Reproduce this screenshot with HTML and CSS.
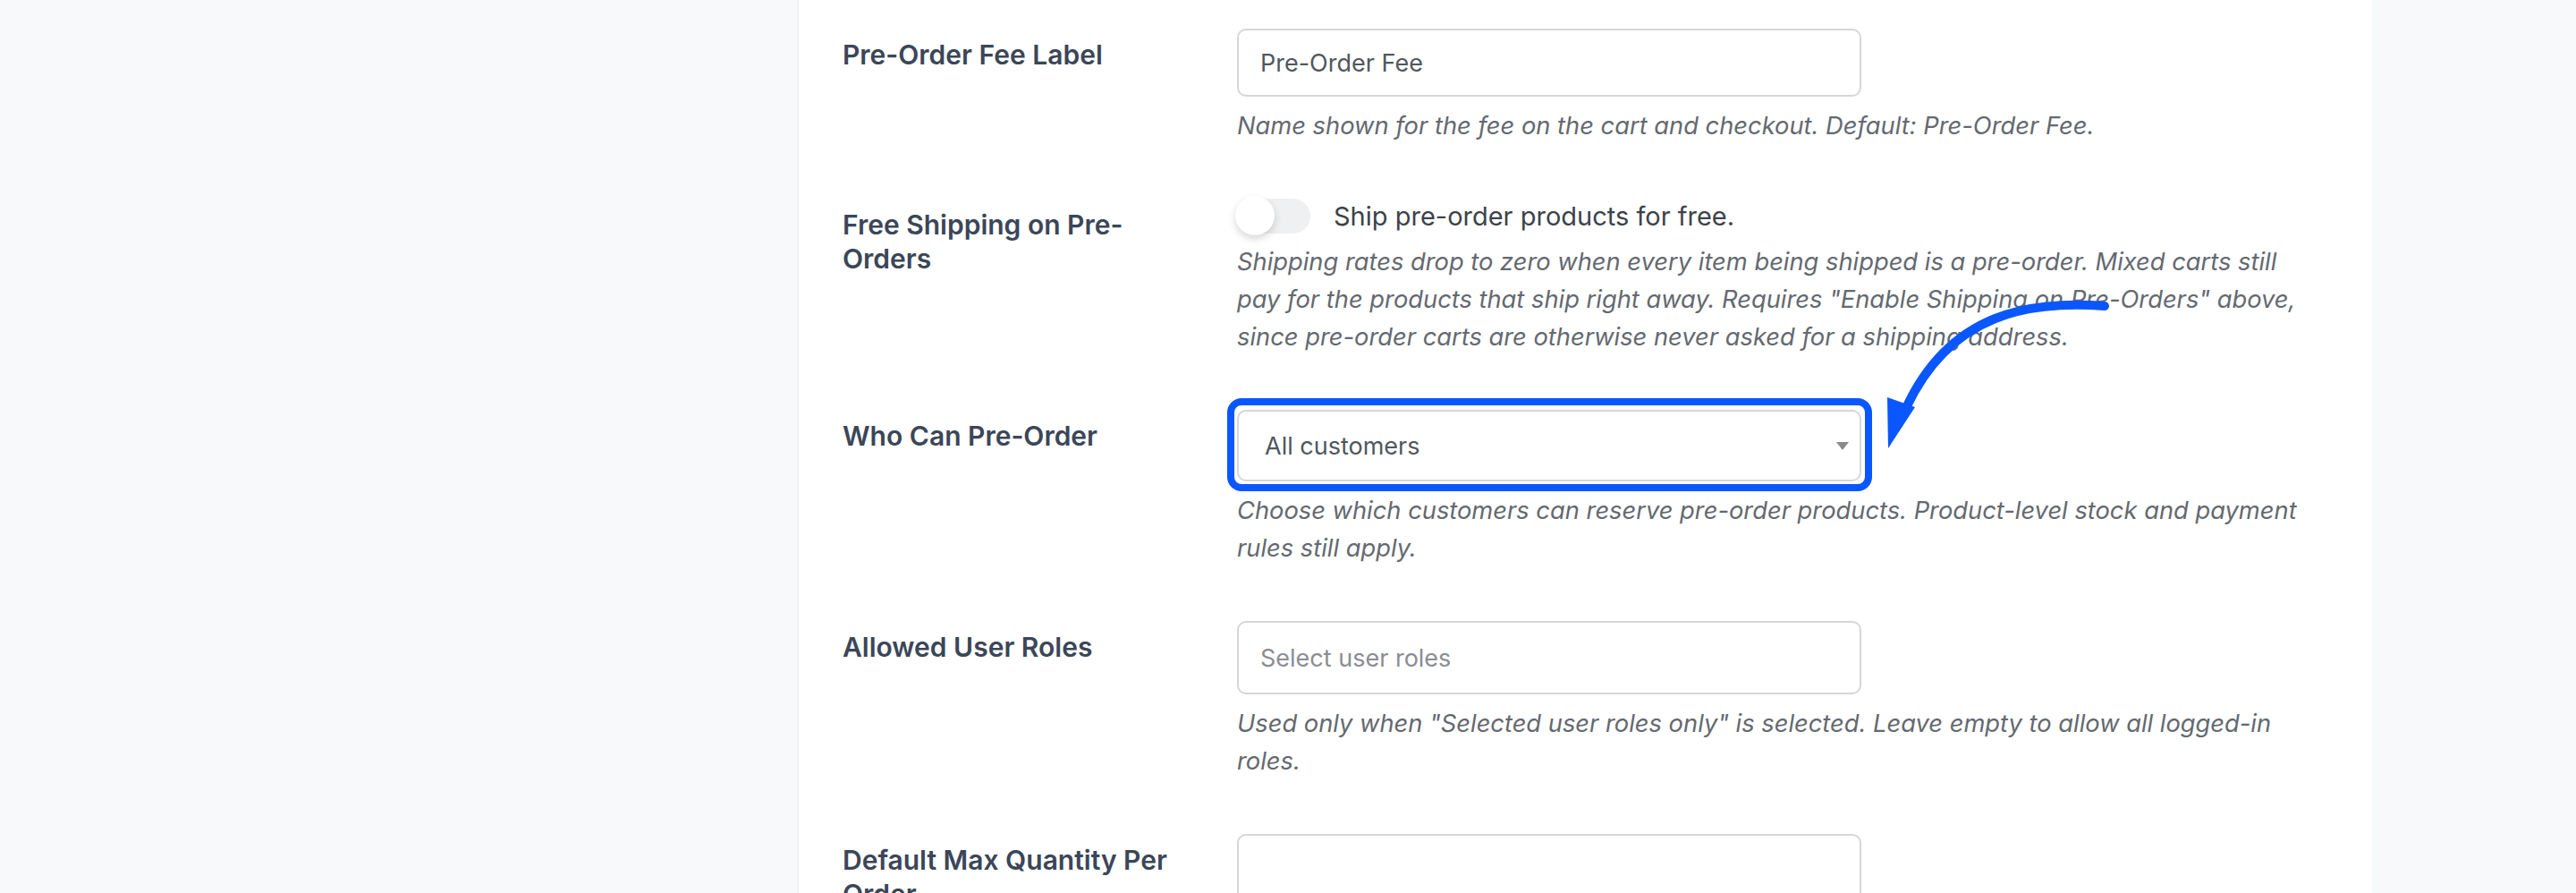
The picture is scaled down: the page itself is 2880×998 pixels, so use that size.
FILE: index.html
```html
<!DOCTYPE html>
<html lang="en">
<head>
    <meta charset="UTF-8">
    <title>Pre-Order Settings</title>
    <link rel="stylesheet" href="styles.css">
</head>
<body>

    <div class="page">
        <div class="card">

            <div class="row">
                <div class="row-label">Pre-Order Fee Label</div>
                <div class="field">
                    <input class="text-input" type="text" value="Pre-Order Fee">
                    <p class="desc">Name shown for the fee on the cart and checkout. Default: Pre-Order Fee.</p>
                </div>
            </div>

            <div class="row">
                <div class="row-label">Free Shipping on Pre-Orders</div>
                <div class="field">
                    <div class="toggle-line">
                        <span class="switch"></span>
                        <span class="toggle-text">Ship pre-order products for free.</span>
                    </div>
                    <p class="desc">Shipping rates drop to zero when every item being shipped is a pre-order. Mixed carts still pay for the products that ship right away. Requires "Enable Shipping on Pre-Orders" above, since pre-order carts are otherwise never asked for a shipping address.</p>
                </div>
            </div>

            <div class="row">
                <div class="row-label">Who Can Pre-Order</div>
                <div class="field">
                    <div class="highlight">
                        <div class="select">
                            <span>All customers</span>
                            <span class="caret"></span>
                        </div>
                        <div class="callout-box"></div>
                        <svg class="callout-arrow" width="280" height="200" viewBox="0 0 280 200">
                            <path d="M262 24 C180 18 90 30 40 138" fill="none" stroke="#0a57ff" stroke-width="10" stroke-linecap="round"/>
                            <polygon points="19,126 50,137 20,183" fill="#0a57ff"/>
                        </svg>
                    </div>
                    <p class="desc">Choose which customers can reserve pre-order products. Product-level stock and payment rules still apply.</p>
                </div>
            </div>

            <div class="row">
                <div class="row-label">Allowed User Roles</div>
                <div class="field">
                    <input class="text-input roles" type="text" placeholder="Select user roles">
                    <p class="desc">Used only when "Selected user roles only" is selected. Leave empty to allow all logged-in roles.</p>
                </div>
            </div>

            <div class="row">
                <div class="row-label">Default Max Quantity Per Order</div>
                <div class="field">
                    <input class="text-input" type="text">
                </div>
            </div>

        </div>
    </div>

</body>
</html>
```

FILE: styles.css
```css
* { box-sizing: border-box; }
html, body { height: 998px; overflow: hidden; }
body { margin: 0; background: #f8f9fb; font-family: Inter, "Noto Sans", sans-serif; }

.page { padding-left: 891px; }
.card { width: 1761px; min-height: 998px; background: #fff; border-left: 2px solid #f0f1f4; padding: 32px 0 0 49px; }

.row { display: grid; grid-template-columns: 441px 1fr; margin-bottom: 60px; }
.row-label { max-width: 380px; padding-top: 10px; font-size: 30px; font-weight: 600; line-height: 38px; color: #3b4658; }
.field { width: 1200px; }

.text-input { display: block; width: 698px; height: 76px; padding: 0 24px; border: 2px solid #d5d6d8; border-radius: 10px; background: #fff; font-family: Inter, sans-serif; font-size: 27px; color: #50575e; outline: none; }
.text-input::placeholder { color: #8a8d92; }
.text-input.roles { height: 82px; }

.desc { margin: 12px 0 0; font-size: 27.3px; line-height: 42px; font-style: italic; color: #646970; }

.toggle-line { display: flex; align-items: center; gap: 26px; height: 38px; }
.switch { position: relative; width: 82px; height: 39px; border-radius: 20px; background: #eef0f2; }
.switch::before { content: ""; position: absolute; left: -2px; top: -3px; width: 44px; height: 44px; border-radius: 50%; background: #fff; box-shadow: 0 4px 9px rgba(0,0,0,0.16); }
.toggle-text { font-size: 29px; color: #3c434a; }

.highlight { position: relative; width: 698px; }
.select { display: flex; align-items: center; justify-content: space-between; height: 80px; padding: 0 12px 0 29px; border: 2px solid #d5d6d8; border-radius: 10px; font-size: 27px; color: #50575e; }
.caret { width: 0; height: 0; border-left: 7px solid transparent; border-right: 7px solid transparent; border-top: 9px solid #8a8a8a; }
.callout-box { position: absolute; top: -13px; left: -11px; right: -12px; bottom: -11px; border: 8px solid #0a57ff; border-radius: 16px; }
.callout-arrow { position: absolute; left: 708px; top: -140px; }
```
